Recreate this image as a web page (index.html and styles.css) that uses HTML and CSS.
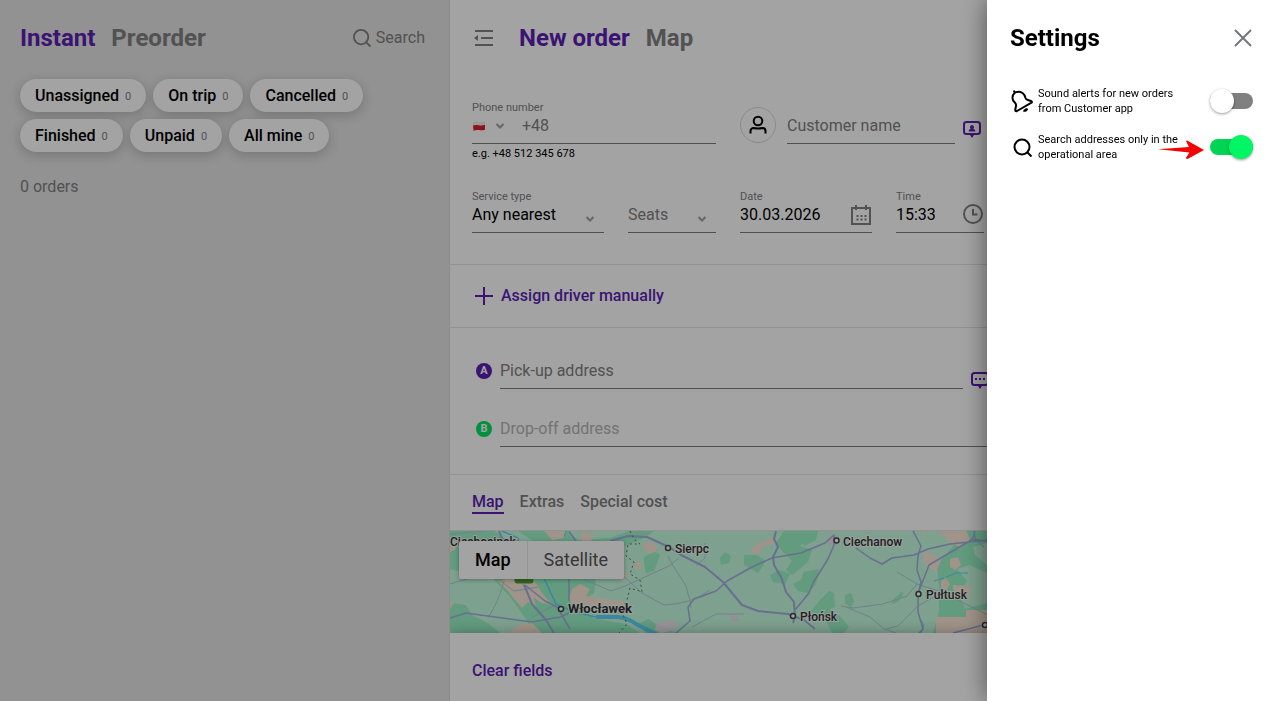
FILE: index.html
```html
<!DOCTYPE html>
<html lang="en">
<head>
    <meta charset="UTF-8">
    <meta name="viewport" content="width=device-width, initial-scale=1.0">
    <title>New order</title>
    <link rel="stylesheet" href="styles.css">
</head>
<body>

<div class="app">
    <section class="orders">
        <header class="orders-header">
            <nav class="titles">
                <button class="title active">Instant</button>
                <button class="title">Preorder</button>
            </nav>
            <button class="search">
                <svg width="18" height="18" viewBox="0 0 20 20" fill="none" stroke="currentColor" stroke-width="2"><circle cx="9" cy="9" r="8"/><path d="M14.5 14.5L19.500 19.500"/></svg>
                Search
            </button>
        </header>
        <div class="filters">
            <button class="filter">Unassigned <span>0</span></button>
            <button class="filter">On trip <span>0</span></button>
            <button class="filter">Cancelled <span>0</span></button>
            <button class="filter">Finished <span>0</span></button>
            <button class="filter">Unpaid <span>0</span></button>
            <button class="filter">All mine <span>0</span></button>
        </div>
        <p class="total">0 orders</p>
    </section>

    <main class="order">
        <header class="order-header">
            <button class="icon-button" aria-label="Collapse list">
                <svg width="20" height="18" viewBox="0 0 20 18" fill="none" stroke="currentColor" stroke-width="2"><path d="M1 2h18M7 9h12M1 16h18"/><path d="M0 9l4-3v6z" fill="currentColor" stroke="none"/></svg>
            </button>
            <nav class="titles">
                <button class="title active">New order</button>
                <button class="title">Map</button>
            </nav>
        </header>

        <div class="details">
            <div class="field phone">
                <label for="phone">Phone number</label>
                <div class="control">
                    <button class="country" aria-label="Country code">
                        <svg width="14" height="10" viewBox="0 0 14 10"><path d="M1 1.500q3-1.500 6-.7t6-.6v4.600H1z" fill="#eee"/><path d="M1 4.600q3-.8 6-.3t6-.5v5q-3 .9-6 .3t-5.500.6z" fill="#dc1e28"/></svg>
                        <svg class="chevron" width="10" height="10" viewBox="0 0 10 10"><path d="M1.500 3L5 6.500 8.500 3"/></svg>
                    </button>
                    <input id="phone" type="tel" placeholder="+48">
                </div>
                <small>e.g. +48 512 345 678</small>
            </div>
            <div class="customer">
                <span class="avatar">
                    <svg width="20" height="20" viewBox="0 0 20 20" fill="none" stroke="#000" stroke-width="2"><circle cx="10" cy="6" r="4.300"/><path d="M2.500 18.500v-2.500a3 3 0 0 1 3-3q4.500 1 9 0a3 3 0 0 1 3 3v2.500"/></svg>
                </span>
                <input id="customer" class="control" type="text" aria-label="Customer name" placeholder="Customer name">
                <button class="icon-button purple" aria-label="Customer note">
                    <svg width="18" height="18" viewBox="0 0 18 18" fill="none" stroke="currentColor" stroke-width="2"><rect x="1" y="2" width="16" height="12" rx="2.500"/><path d="M7 15h4l-2 3z" fill="currentColor" stroke="none"/><path d="M5.500 11.500q.5-2.500 2.200-2.800a2 2 0 1 1 2.600 0q1.700.3 2.200 2.800z" fill="currentColor" stroke="none"/></svg>
                </button>
            </div>
            <div class="field">
                <label for="service">Service type</label>
                <div class="control">
                    <select id="service"><option>Any nearest</option></select>
                    <svg class="chevron" width="10" height="10" viewBox="0 0 10 10"><path d="M1.500 3L5 6.500 8.500 3"/></svg>
                </div>
            </div>
            <div class="field seats">
                <div class="control">
                    <select aria-label="Seats"><option>Seats</option></select>
                    <svg class="chevron" width="10" height="10" viewBox="0 0 10 10"><path d="M1.500 3L5 6.500 8.500 3"/></svg>
                </div>
            </div>
            <div class="field">
                <label for="date">Date</label>
                <div class="control">
                    <input id="date" type="text" value="30.03.2026">
                    <svg width="22" height="22" viewBox="0 0 22 22" fill="none" stroke="#808080" stroke-width="2"><path d="M2 4h18v16H2zM6 1v5M16 1v5"/><path d="M6.500 12h10M6.500 15.500h10" stroke-dasharray="2 2"/></svg>
                </div>
            </div>
            <div class="field">
                <label for="time">Time</label>
                <div class="control">
                    <input id="time" type="text" value="15:33">
                    <svg width="22" height="22" viewBox="0 0 22 22" fill="none" stroke="#808080" stroke-width="2"><circle cx="11" cy="10" r="9"/><path d="M11 5v5.500h4.500"/></svg>
                </div>
            </div>
        </div>

        <div class="driver">
            <button class="link-button">
                <svg width="18" height="18" viewBox="0 0 18 18" fill="none" stroke="currentColor" stroke-width="2"><path d="M9 0v18M0 9h18"/></svg>
                Assign driver manually
            </button>
        </div>

        <div class="addresses">
            <div class="address">
                <span class="point">A</span>
                <input class="control" type="text" aria-label="Pick-up address" placeholder="Pick-up address">
                <button class="icon-button purple" aria-label="Pick-up note">
                    <svg width="18" height="18" viewBox="0 0 18 18" fill="none" stroke="currentColor" stroke-width="2"><rect x="1" y="2" width="16" height="12" rx="2.500"/><path d="M7 15h4l-2 3z" fill="currentColor" stroke="none"/><path d="M4 8h10" stroke-dasharray="2 2"/></svg>
                </button>
            </div>
            <div class="address">
                <span class="point green">B</span>
                <input class="control pale" type="text" aria-label="Drop-off address" placeholder="Drop-off address">
            </div>
        </div>

        <nav class="tabs">
            <button class="tab active">Map</button>
            <button class="tab">Extras</button>
            <button class="tab">Special cost</button>
        </nav>

        <div class="map">
            <svg class="map-canvas" viewBox="0 0 818 102" preserveAspectRatio="xMinYMin slice">
                <rect width="818" height="102" fill="#c5fadf"/>
                <g fill="#99f2c6">
                    <path d="M0 0h44l14 10 20 4 22-2 14 8 14 14 12-8 6 22-2 14-18 12 20 14 30 5 20 13v-4l14-5 20 5 2 8H86l-10-22-16-22-22-24L8 40 0 38z"/>
                    <path d="M68 0h50l10 9 32-2 20-7h24l-12 8-20 8H92z"/>
                    <path d="M194 26l10-6 6 4-6 16-8 2-2-10zM270 27l5-6 6 4-2 7-8 2zM294 24l12 0 10 6-8 12-14-8zM334 0h26l-4 9-6 6 12 4-4 12-16 13-6-5 6-9-10-10-6-8zM320 44l10-5 10 4-5 10-12-2zM354 41l15-3-3 15-8 9-10-2-5-7 8-4zM371 68l8-8 5 2 1 14-6 2 12 8 8 10-5 6h-12l-8-16-14-5zM395 64l6-2 3 8-3 7-6-5zM442 70l9-9 3 1-6 9-6 2zM350 0h18l-2 9-12 6z"/>
                    <path d="M474 0h63v12l-14 4 2 8 12 10v8l-18-8-12 4 10 12-8 12 6 16 22-6v20l-22-4-10 14h-22l6-22 0-26-2-20 12-14 8-10-18-10z"/>
                    <path d="M0 74q8-5 18-1l4 10 18 10 10 9H0zM189 92l10-4 8 6v8h-12z"/>
                </g>
                <path d="M0 52l14 4 22-6 16 26 14 26H50L38 92 22 84l-6-10-16-2z" fill="#c5fadf"/>
                <g fill="#fae7d6">
                    <path d="M94 0h22l-2 7-12 2zM132 0l12 4-4 8-10-3zM0 8l8 3-3 8-5 2zM48 50l18-4 20 6 6 10 10 12-10-2-8-5 2 8-8-4-6 6-7-8-6-8zM68 94l14-2 10 10H60zM122 58l8-5 10 5-4 7 20 3 16 2 6 7-10-2-14 5-18-6-12 2-5-8zM192 15l7-5 8 4-1 7-7 2zM184 32l6-2 2 6-6 3zM170 42l8 0-2 6-6 2z"/>
                    <path d="M300 22q3-8 12-11l13-5 1 6-14 4-4 8zM488 0h28l4 8-10 8-10-5zM472 22l10 0 9 8-5 10-10-4zM500 28l8-2 3 8-6 5-5-3zM491 50l5-3 4 6-4 6-5-2zM503 54l18 1-1 12-10-2-7-7zM486 86l30 0 0-7 22 0v23h-52zM474 0l2 4-6-2zM0 70l4 2-4 6z"/>
                </g>
                <path d="M206 94q10-7 22-3l-3 8-14 3-6-3z" fill="#e9e6ea"/>
                <path d="M280 84l6 0 4 6-8 1zM379 4l10 1 0 9-8 1-4-4z" fill="#e5e0ea"/>
                <g fill="none" stroke="#60d4f8" stroke-width="1.500">
                    <path d="M52 0l16 7 2 10 22 26 14 30 18 8 22 5"/>
                    <path d="M146 86l22 0q10 1 18 7l24 12" stroke-width="4"/>
                    <path d="M116 0l-2 6M470 88l4 6-3 8M524 0l2 9 8 7M496 46l10-4 12 0M484 50l10-3" stroke-width="1"/>
                </g>
                <g fill="none" stroke="#b0cdd2" stroke-width="1">
                    <path d="M0 3l36-3M54 50q-5 20-16 37M40 42l24 18 24-4M103 75l-22 12M119 42l42 18 14-5 44-20 10-8M218 25l4 8 14 22 4 15 1 7M170 42l22 20 22 12q28-1 46-15M255 12v15l-9 8M0 53l30-9M242 96l24-13h28M391 75l12 2 30-4 24-8 10-12-20-12M467 53l24 8 47 23M396 76l24 10 14 12 12 4M436 98l12-3 20-20 24-14"/>
                </g>
                <g fill="none" stroke="#a3aee0" stroke-width="2" stroke-linejoin="round">
                    <path d="M49 0l16 38 10 18 7 17 14 16 8 13"/>
                    <path d="M160 10l18-5 19 1 22 10 12 8 24 12 18 15 19 23 16 6 30 3 16 6 11 9"/>
                    <path d="M326 0l-2 8 4 8-5 10 1 8 8 14 4 13 8 10 1 14-2 7"/>
                </g>
                <g fill="none" stroke="#a3aee0" stroke-width="1.500" stroke-linejoin="round">
                    <path d="M0 87l16-5 14 2 52 7 28-5 18-8M75 54l20 16 12 6 13 22M119 0l8 12M119 48v22M226 102l14-12-2-14 6-8 22-8 11-10 25-14 20-9 29-5 24-10 9-8v10l-6 14-15 24-4 10-14 17M406 17l14 10 12 6 10-6 22-3 14-6 22-5 28-3 10-1M463 0l8 15-3 10-1 14 4 12-3 12v18l5 17-4 4M469 60l10-26 44-26 2-8M521 8l16 2M503 102l34-9"/>
                </g>
                <path d="M180 0l4 8 6 5-12 0-2 12 8 6-4 12 10 6 2 12-12-4-3 12-6 10 6 14-8 9" fill="none" stroke="#5c7568" stroke-width="1" stroke-dasharray="2 3"/>
                <rect x="64" y="38" width="20" height="15" rx="3" fill="#4f9d2c" stroke="#e8f0d8"/>
                <g class="map-towns">
                    <circle cx="111" cy="78" r="2.500"/><circle cx="218" cy="17" r="2.500"/><circle cx="386.500" cy="9.500" r="2.500"/><circle cx="343" cy="85" r="2.500"/><circle cx="468.500" cy="63" r="2.500"/><circle cx="535" cy="94" r="2.500"/><circle cx="63" cy="11" r="2.500"/>
                </g>
                <g class="map-labels">
                    <text x="0" y="15">Ciechocinek</text>
                    <text x="118" y="82" class="city">Włocławek</text>
                    <text x="225" y="22">Sierpc</text>
                    <text x="350" y="90">Płońsk</text>
                    <text x="393" y="15">Ciechanow</text>
                    <text x="476" y="68">Pułtusk</text>
                </g>
            </svg>
            <div class="map-types">
                <button class="active">Map</button>
                <button>Satellite</button>
            </div>
        </div>

        <footer class="order-footer">
            <button class="link-button">Clear fields</button>
        </footer>
    </main>
</div>

<div class="backdrop"></div>

<aside class="drawer">
    <header class="drawer-header">
        <h2>Settings</h2>
        <button class="icon-button" aria-label="Close">
            <svg width="18" height="18" viewBox="0 0 18 18" fill="none" stroke="#75757f" stroke-width="2"><path d="M1 1l16 16M17 1L1 17"/></svg>
        </button>
    </header>
    <div class="setting">
        <svg width="24" height="24" viewBox="0 0 24 24" fill="none" stroke="#000" stroke-width="2" stroke-linejoin="round"><path d="M4.500 4q4-2.500 8 0 2.300 1.800 2.800 4.500.5 2 2.700 2.500l3.500 1.200q1 .7 0 1.500L7 22q-2 .6-1.700-1.500l.7-3.500q.4-1.800-1.200-3.500-2.500-2.200-2.300-5T4.500 4zM4.800 4L3.800 1.500"/><path d="M13.500 21.300q2.500 1 3.500-2" stroke-width="2.500"/></svg>
        <label for="sound">Sound alerts for new orders from Customer app</label>
        <input id="sound" class="switch" type="checkbox">
    </div>
    <div class="setting">
        <svg width="24" height="24" viewBox="0 0 24 24" fill="none" stroke="#000" stroke-width="2"><circle cx="12" cy="12" r="7.500"/><path d="M17 17l4.500 4.500"/></svg>
        <label for="area">Search addresses only in the operational area</label>
        <input id="area" class="switch" type="checkbox" checked>
        <svg class="arrow" width="46" height="20" viewBox="0 0 46 20"><path d="M0 9.300l31-2.300L28 1q1-.8 2 0l16 9-16 8.800q-2 .5-2-1l3.500-5.300z" fill="#f40000"/></svg>
    </div>
</aside>

</body>
</html>
```

FILE: styles.css
```css
* {
    box-sizing: border-box;
}

body {
    margin: 0;
    font-family: Roboto, "Liberation Sans", sans-serif;
    font-size: 16px;
    line-height: 20px;
    color: #000;
    overflow: hidden;
}

button,
input,
select {
    font: inherit;
    color: inherit;
    background: none;
    border: none;
    padding: 0;
    margin: 0;
    outline: none;
}

button {
    cursor: pointer;
}

svg {
    display: block;
    flex-shrink: 0;
}

.app {
    display: flex;
    min-height: 100vh;
}

/* order list */
.orders {
    width: 450px;
    flex-shrink: 0;
    padding: 0 20px;
    background-color: #e4e4e4;
    border-right: 1px solid #dcdcdc;
}

.orders-header,
.order-header {
    display: flex;
    align-items: center;
    height: 76px;
}

.orders-header {
    justify-content: space-between;
    padding-right: 4px;
}

.titles {
    display: flex;
    gap: 16px;
}

.title {
    font-size: 24px;
    line-height: 32px;
    font-weight: 700;
    color: #808080;
}

.title.active {
    color: #5c1fb4;
}

.search {
    display: flex;
    align-items: center;
    gap: 5px;
    color: #808080;
}

.filters {
    display: flex;
    flex-wrap: wrap;
    gap: 7px;
    padding-top: 3px;
}

.filter {
    display: flex;
    align-items: center;
    gap: 6px;
    height: 33px;
    padding: 0 15px;
    border-radius: 17px;
    background-color: #fff;
    font-weight: 500;
    box-shadow: 0 3px 12px rgba(0, 0, 0, 0.2);
}

.filter span {
    padding-top: 3px;
    font-size: 11px;
    font-weight: 400;
    color: #808080;
}

.total {
    margin: 25px 0 0;
    color: #808080;
}

/* order form */
.order {
    display: flex;
    flex-direction: column;
    flex: 1;
    min-width: 0;
    overflow: hidden;
    background-color: #fff;
}

.order-header {
    gap: 25px;
    padding: 0 24px;
    color: #808080;
}

.icon-button {
    display: flex;
    color: #808080;
}

.purple {
    color: #5c1fb4;
}

.details {
    display: grid;
    grid-template-columns: 3fr 2fr 3fr 2fr;
    gap: 25px 24px;
    padding: 24px 284px 31px 22px;
    border-bottom: 1px solid #e4e4e4;
}

.field {
    display: flex;
    flex-direction: column;
    min-width: 0;
}

.field label {
    font-size: 11px;
    line-height: 16px;
    color: #808080;
}

.field small {
    font-size: 11px;
    line-height: 20px;
}

.seats {
    justify-content: flex-end;
    color: #808080;
}

.control {
    display: flex;
    align-items: center;
    height: 28px;
    padding-bottom: 8px;
    border-bottom: 1px solid #7c7c7c;
}

.control input,
.control select {
    flex: 1;
    width: 0;
    min-width: 0;
    appearance: none;
}

input::placeholder {
    color: #808080;
    opacity: 1;
}

.pale::placeholder {
    color: #b4b4b4;
}

.chevron {
    fill: none;
    stroke: #a0a0a0;
    stroke-width: 2;
}

.control select + .chevron {
    margin: 8px 9px 0 0;
}

.phone,
.customer {
    grid-column: span 2;
}

.phone .control {
    gap: 17px;
}

.country {
    display: flex;
    align-items: center;
    gap: 9px;
}

.customer {
    display: flex;
    align-items: center;
    gap: 11px;
    height: 50px;
}

.customer .control {
    flex: 1;
    min-width: 0;
    margin-top: 10px;
}

.customer .icon-button {
    margin: 8px 3px 0 -3px;
}

.avatar {
    display: flex;
    align-items: center;
    justify-content: center;
    width: 36px;
    height: 36px;
    border: 1px solid #d8d8d8;
    border-radius: 50%;
}

.driver {
    display: flex;
    align-items: center;
    height: 63px;
    padding: 0 25px;
    border-bottom: 1px solid #e4e4e4;
}

.link-button {
    display: flex;
    align-items: center;
    gap: 8px;
    font-weight: 500;
    color: #5c1fb4;
}

.addresses {
    display: flex;
    flex-direction: column;
    gap: 30px;
    padding: 33px 279px 27px 26px;
    border-bottom: 1px solid #e4e4e4;
}

.address {
    display: flex;
    gap: 8px;
}

.address .control {
    flex: 1;
    min-width: 0;
}

.address .icon-button {
    align-self: flex-end;
}

.point {
    width: 16px;
    height: 16px;
    margin-top: 2px;
    border-radius: 50%;
    background-color: #5c1fb4;
    color: #fff;
    font-size: 11px;
    line-height: 16px;
    font-weight: 700;
    text-align: center;
}

.point.green {
    background-color: #00e35f;
}

.tabs {
    display: flex;
    align-items: center;
    gap: 16px;
    height: 56px;
    padding: 1px 22px 0;
    border-bottom: 1px solid #e4e4e4;
}

.tab {
    font-weight: 500;
    color: #808080;
    border-bottom: 2px solid transparent;
}

.tab.active {
    color: #5c1fb4;
    border-color: #5c1fb4;
}

.map {
    position: relative;
    height: 102px;
    overflow: hidden;
}

.map-canvas {
    width: 100%;
    min-width: 818px;
    height: 102px;
}

.map-towns {
    fill: #fff;
    stroke: #444;
    stroke-width: 1.5px;
}

.map-labels {
    font-size: 12px;
    font-weight: 500;
    fill: #333;
    stroke: #eefaf4;
    stroke-width: 2px;
    paint-order: stroke;
}

.map-labels .city {
    font-size: 13px;
    font-weight: 700;
}

.map-types {
    position: absolute;
    top: 10px;
    left: 9px;
    display: flex;
    border-radius: 2px;
    background-color: #fff;
    box-shadow: 0 1px 4px rgba(0, 0, 0, 0.3);
}

.map-types button {
    height: 38px;
    padding: 0 16px;
    font-size: 18px;
    color: #565656;
}

.map-types .active {
    font-weight: 500;
    color: #000;
    border-right: 1px solid #e6e6e6;
}

.order-footer {
    position: relative;
    flex: 1;
    padding: 28px 22px 20px;
    background-color: #fff;
    box-shadow: 0 0 12px rgba(0, 0, 0, 0.3);
}

/* settings drawer */
.backdrop {
    position: fixed;
    inset: 0;
    background-color: rgba(0, 0, 0, 0.36);
}

.drawer {
    position: fixed;
    top: 0;
    right: 0;
    bottom: 0;
    width: 281px;
    padding: 0 15px 0 23px;
    background-color: #fff;
    box-shadow: 0 0 24px rgba(0, 0, 0, 0.5);
}

.drawer-header {
    display: flex;
    align-items: center;
    justify-content: space-between;
    height: 76px;
    margin-bottom: 10px;
    padding-right: 1px;
}

.drawer-header h2 {
    margin: 0;
    font-size: 24px;
    line-height: 32px;
    font-weight: 700;
}

.setting {
    position: relative;
    display: flex;
    align-items: center;
    gap: 4px;
    height: 30px;
    margin-bottom: 16px;
}

.setting label {
    flex: 1;
    padding-right: 22px;
    font-size: 11px;
    line-height: 15px;
}

.switch {
    display: flex;
    align-items: center;
    appearance: none;
    width: 43px;
    height: 16px;
    border-radius: 8px;
    background-color: #808080;
}

.switch::before {
    content: '';
    width: 24px;
    height: 24px;
    border-radius: 50%;
    background-color: #fff;
    box-shadow: 0 1px 3px rgba(0, 0, 0, 0.4);
}

.switch:checked {
    justify-content: flex-end;
    background-color: #00d455;
}

.switch:checked::before {
    background-color: #00f663;
}

.arrow {
    position: absolute;
    right: 49px;
    top: 8px;
}
```
